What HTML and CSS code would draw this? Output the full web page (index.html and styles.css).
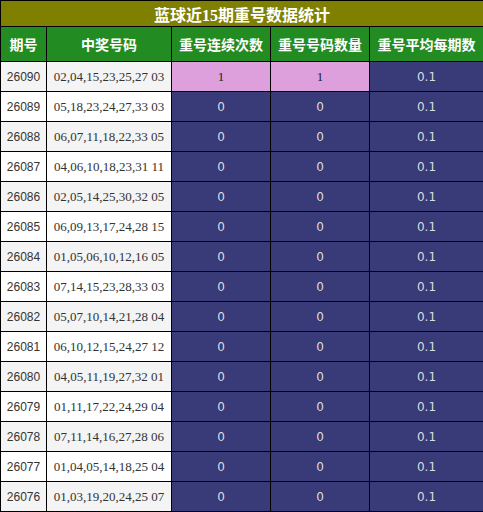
FILE: index.html
```html
<!DOCTYPE html>
<html lang="zh">
<head>
<meta charset="UTF-8">
<title>蓝球近15期重号数据统计</title>
<link rel="stylesheet" href="styles.css">
</head>
<body>
<table class="stats">
    <colgroup>
        <col class="c-issue">
        <col class="c-nums">
        <col class="c-run">
        <col class="c-count">
        <col class="c-avg">
    </colgroup>
    <tr class="title-row"><th colspan="5">蓝球近15期重号数据统计</th></tr>
    <tr class="head-row">
        <th>期号</th>
        <th>中奖号码</th>
        <th>重号连续次数</th>
        <th>重号号码数量</th>
        <th>重号平均每期数</th>
    </tr>
    <tbody id="rows"></tbody>
</table>

<script>
    const draws = [
        ['26090', '02,04,15,23,25,27 03', 1, 1, '0.1'],
        ['26089', '05,18,23,24,27,33 03', 0, 0, '0.1'],
        ['26088', '06,07,11,18,22,33 05', 0, 0, '0.1'],
        ['26087', '04,06,10,18,23,31 11', 0, 0, '0.1'],
        ['26086', '02,05,14,25,30,32 05', 0, 0, '0.1'],
        ['26085', '06,09,13,17,24,28 15', 0, 0, '0.1'],
        ['26084', '01,05,06,10,12,16 05', 0, 0, '0.1'],
        ['26083', '07,14,15,23,28,33 03', 0, 0, '0.1'],
        ['26082', '05,07,10,14,21,28 04', 0, 0, '0.1'],
        ['26081', '06,10,12,15,24,27 12', 0, 0, '0.1'],
        ['26080', '04,05,11,19,27,32 01', 0, 0, '0.1'],
        ['26079', '01,11,17,22,24,29 04', 0, 0, '0.1'],
        ['26078', '07,11,14,16,27,28 06', 0, 0, '0.1'],
        ['26077', '01,04,05,14,18,25 04', 0, 0, '0.1'],
        ['26076', '01,03,19,20,24,25 07', 0, 0, '0.1']
    ];

    const rows = document.getElementById('rows');
    draws.forEach(d => {
        const tr = document.createElement('tr');
        const hit = d[2] > 0 ? 'hit' : 'miss';
        tr.innerHTML = `
            <td class="issue">${d[0]}</td>
            <td class="nums">${d[1]}</td>
            <td class="${hit}">${d[2]}</td>
            <td class="${hit}">${d[3]}</td>
            <td class="miss avg">${d[4]}</td>
        `;
        rows.appendChild(tr);
    });
</script>
</body>
</html>
```
FILE: styles.css
```css
body {
    margin: 0;
    padding: 0;
    background-color: #fff;
}

.stats {
    width: 483px;
    table-layout: fixed;
    border-collapse: collapse;
    font-family: "Liberation Serif", "Noto Sans CJK SC", serif;
    font-size: 13px;
    color: #333;
}

.c-issue { width: 46px; }
.c-nums { width: 125px; }
.c-run { width: 99px; }
.c-count { width: 99px; }
.c-avg { width: 114px; }

.stats th,
.stats td {
    border: 1px solid #000;
    padding: 0;
    text-align: center;
}

.title-row th {
    height: 25px;
    background-color: #808000;
    color: #fff;
    font-size: 16px;
    font-weight: bold;
}

.head-row th {
    height: 34px;
    background-color: #228b22;
    color: #fff;
    font-family: "Noto Sans CJK SC", sans-serif;
    font-size: 14px;
    font-weight: bold;
}

.stats td {
    height: 29px;
}

#rows tr:nth-child(odd) .issue,
#rows tr:nth-child(odd) .nums {
    background-color: #f4f4f4;
}

.issue {
    font-family: "Liberation Sans", sans-serif;
    font-size: 12px;
}

.hit {
    background-color: #dda0dd;
    color: #222;
}

.miss {
    background-color: #393a78;
    color: #ddd;
    font-family: "DejaVu Sans", sans-serif;
    font-size: 12px;
}
```
